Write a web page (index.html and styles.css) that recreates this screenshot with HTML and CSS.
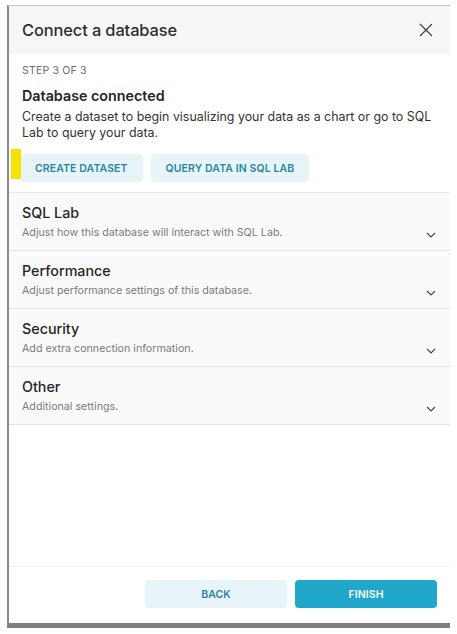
FILE: index.html
```html
<!DOCTYPE html>
<html>
<head>
<meta charset="utf-8">
<link rel="stylesheet" href="styles.css">
</head>
<body>
<div class="frame">
  <div class="header">
    <div class="title">Connect a database</div>
    <svg class="close" width="14" height="14" viewBox="0 0 14 14"><path d="M1 1L13 13M13 1L1 13" stroke="#444" stroke-width="1.3" fill="none"/></svg>
  </div>
  <div class="body">
    <div class="step">STEP 3 OF 3</div>
    <div class="heading">Database connected</div>
    <div class="desc">Create a dataset to begin visualizing your data as a chart or go to SQL Lab to query your data.</div>
    <div class="actions">
      <span class="marker"></span>
      <button class="btn btn-light btn-sm">CREATE DATASET</button>
      <button class="btn btn-light btn-sm">QUERY DATA IN SQL LAB</button>
    </div>
  </div>
  <div class="panels">
    <div class="panel">
      <div class="panel-text">
        <div class="panel-title">SQL Lab</div>
        <div class="panel-sub">Adjust how this database will interact with SQL Lab.</div>
      </div>
      <svg class="chev" width="10" height="6" viewBox="0 0 10 6"><path d="M1 1L5 5L9 1" stroke="#444" stroke-width="1.1" fill="none"/></svg>
    </div>
    <div class="panel">
      <div class="panel-text">
        <div class="panel-title">Performance</div>
        <div class="panel-sub">Adjust performance settings of this database.</div>
      </div>
      <svg class="chev" width="10" height="6" viewBox="0 0 10 6"><path d="M1 1L5 5L9 1" stroke="#444" stroke-width="1.1" fill="none"/></svg>
    </div>
    <div class="panel">
      <div class="panel-text">
        <div class="panel-title">Security</div>
        <div class="panel-sub">Add extra connection information.</div>
      </div>
      <svg class="chev" width="10" height="6" viewBox="0 0 10 6"><path d="M1 1L5 5L9 1" stroke="#444" stroke-width="1.1" fill="none"/></svg>
    </div>
    <div class="panel">
      <div class="panel-text">
        <div class="panel-title">Other</div>
        <div class="panel-sub">Additional settings.</div>
      </div>
      <svg class="chev" width="10" height="6" viewBox="0 0 10 6"><path d="M1 1L5 5L9 1" stroke="#444" stroke-width="1.1" fill="none"/></svg>
    </div>
  </div>
  <div class="spacer"></div>
  <div class="footer">
    <button class="btn btn-light btn-lg">BACK</button>
    <button class="btn btn-primary btn-lg">FINISH</button>
  </div>
</div>
</body>
</html>
```

FILE: styles.css
```css
* { box-sizing: border-box; }
html, body { margin: 0; padding: 0; background: #fff; }
body { font-family: Inter, "Noto Sans", sans-serif; color: #323232; }

.frame {
  margin: 5px 0 0 7px;
  width: 443px;
  height: 623px;
  border-left: 2px solid #8a8a8a;
  border-top: 1px solid #c4c4c4;
  border-bottom: 5px solid #7f7f7f;
  display: flex;
  flex-direction: column;
  background: #fff;
}

.header {
  height: 48px;
  background: #f6f6f6;
  display: flex;
  align-items: center;
  justify-content: space-between;
  padding: 0 17px 0 13px;
  flex: none;
}
.title { font-size: 16.4px; font-weight: 500; color: #2e2e2e; letter-spacing: -0.1px; }
.close { display: block; }

.body { padding: 9px 0 0 13px; position: relative; }
.step { font-size: 10.5px; line-height: 16px; color: #6a6a6a; letter-spacing: 0.2px; }
.heading { margin-top: 7px; font-size: 14.3px; line-height: 20px; font-weight: 600; color: #262626; }
.desc { margin-top: 3px; font-size: 12.4px; line-height: 16px; color: #333; padding-right: 8px; }

.actions { margin-top: 13px; display: flex; gap: 8px; position: relative; }
.marker {
  position: absolute;
  left: -11px;
  top: -5px;
  width: 10px;
  height: 30px;
  background: #f5e200;
}

.btn {
  font-family: Inter, "Noto Sans", sans-serif;
  border: none;
  border-radius: 4px;
  font-weight: 600;
  font-size: 10.5px;
  letter-spacing: 0.1px;
  cursor: pointer;
  padding: 0;
}
.btn-light { background: #e8f5f8; color: #2a86a0; }
.btn-primary { background: #20a7c9; color: #fff; }
.btn-sm { height: 28px; padding: 0 15px; }
.btn-sm:first-of-type { margin-left: -2px; }
.btn-lg { height: 28px; width: 142px; }

.panels { margin-top: 10px; border-top: 1px solid #e6e6e6; }
.panel {
  height: 58px;
  background: #fafafa;
  border-bottom: 1px solid #e3e3e3;
  display: flex;
  align-items: flex-end;
  justify-content: space-between;
  padding: 0 14px 10px 13px;
}
.panel-text { display: flex; flex-direction: column; }
.panel-title { font-size: 14.3px; line-height: 20px; font-weight: 500; color: #262626; }
.panel-sub { margin-top: 3px; font-size: 10.7px; line-height: 14px; color: #7a7a7a; }
.chev { display: block; margin-bottom: 2px; }

.spacer { flex: 1; }

.footer {
  height: 57px;
  flex: none;
  border-top: 1px solid #f0f0f0;
  display: flex;
  justify-content: flex-end;
  align-items: flex-start;
  gap: 8px;
  padding: 13px 13px 0 0;
}
```
